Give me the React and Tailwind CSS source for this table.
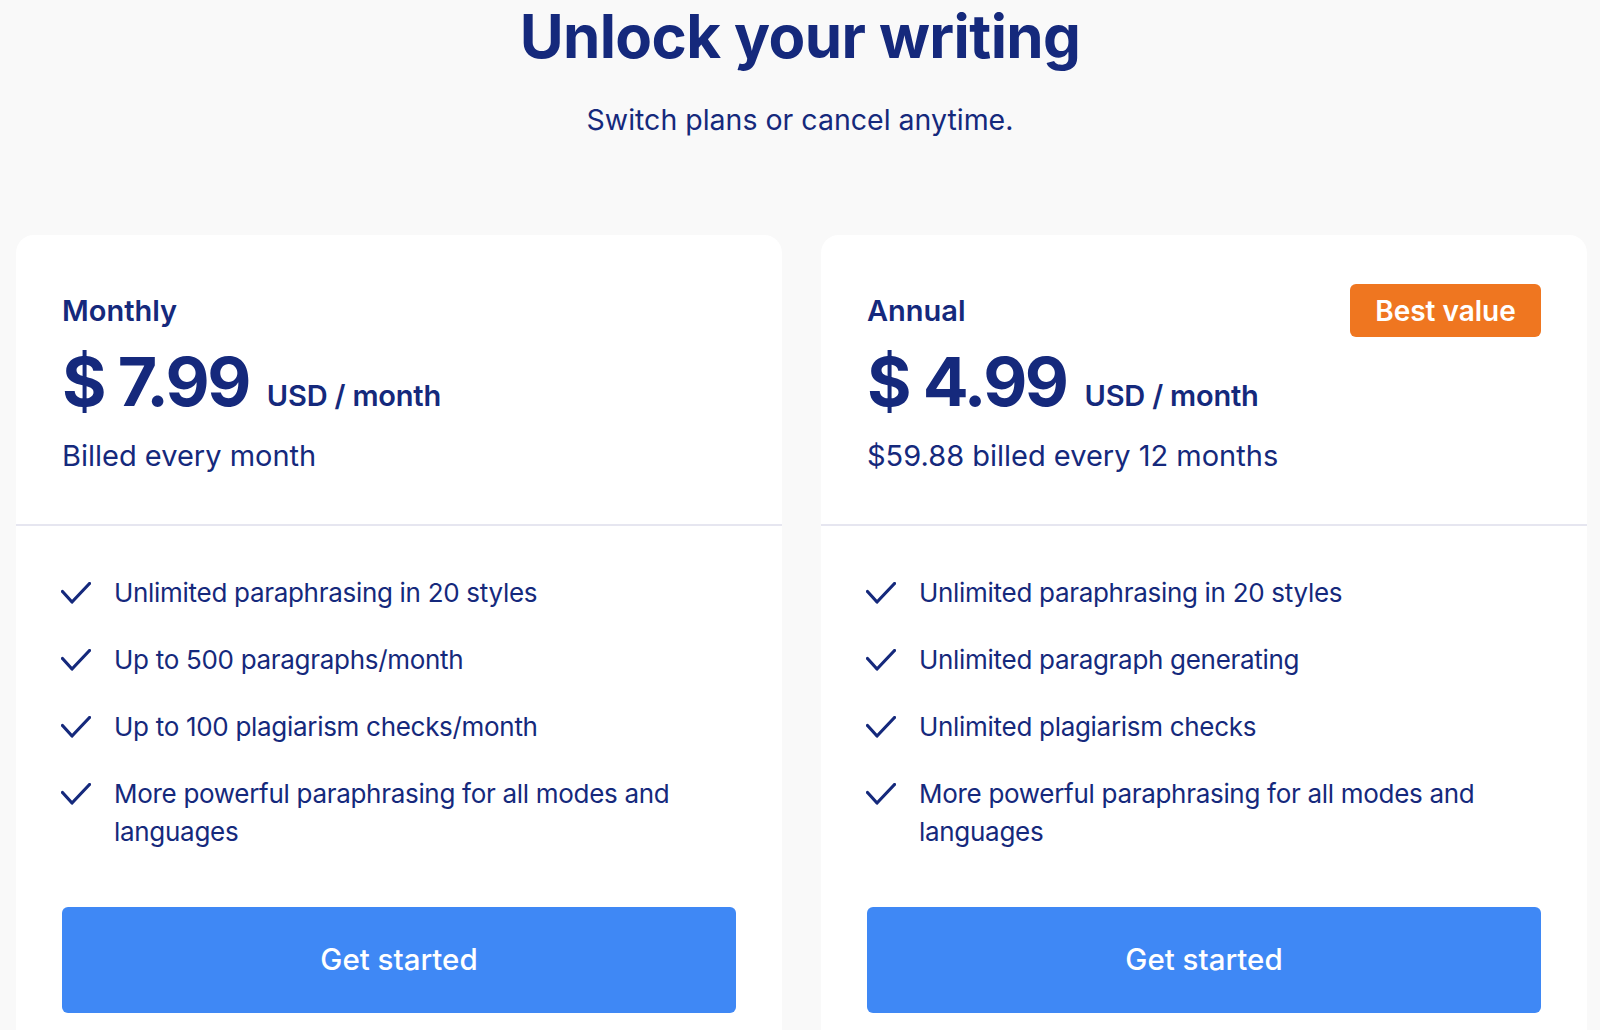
import React from "react";

const Check = () => (
  <svg width="30" height="22" viewBox="0 0 30 22" fill="none" className="shrink-0 mt-[8px] -ml-[1px]">
    <path d="M1.5 9.5 L11 20 L28.5 1.5" stroke="#15297c" strokeWidth="3.2" strokeLinecap="round" strokeLinejoin="round" />
  </svg>
);

function Card({ name, price, billed, features, badge }) {
  return (
    <div className="w-[766px] shrink-0 bg-white rounded-[18px]">
      <div className="px-[46px] pt-[49px] pb-[50px] border-b-2 border-[#e6e6f0]">
        <div className="flex items-center justify-between h-[53px]">
          <div className="text-[29px] font-semibold leading-none">{name}</div>
          {badge && (
            <div className="h-[53px] w-[191px] rounded-[6px] bg-[#ef7620] text-white text-[28px] font-semibold flex items-center justify-center">
              {badge}
            </div>
          )}
        </div>
        <div className="flex items-baseline mt-[9px]">
          <div className="text-[68px] font-bold leading-[70px] tracking-[-2.5px]">{price}</div>
          <div className="ml-[18px] text-[29px] font-semibold tracking-[-0.2px]">USD / month</div>
        </div>
        <div className="mt-[20px] text-[29px] leading-[36px]">{billed}</div>
      </div>
      <div className="px-[46px] pt-[48px] pb-[46px]">
        <ul className="flex flex-col gap-[29px]">
          {features.map((f) => (
            <li key={f} className="flex gap-[23px] items-start">
              <Check />
              <span className="text-[26px] leading-[38px] tracking-[-0.3px]">{f}</span>
            </li>
          ))}
        </ul>
        <button className="mt-[56px] w-full h-[106px] rounded-[6px] bg-[#3f88f5] text-white text-[29.5px] font-medium">
          Get started
        </button>
      </div>
    </div>
  );
}

export default function App() {
  return (
    <div
      className="h-[1030px] overflow-hidden bg-[#f9f9f9] text-[#15297c]"
      style={{ fontFamily: "Inter, 'Noto Sans', sans-serif" }}
    >
      <div className="pt-[6px] text-center">
        <h1 className="text-[60px] font-bold leading-[60px] tracking-[-0.6px]">Unlock your writing</h1>
        <p className="mt-[36px] text-[28.5px] leading-[36px]">Switch plans or cancel anytime.</p>
      </div>
      <div className="flex gap-[39px] pl-[16px] mt-[97px]">
        <Card
          name="Monthly"
          price="$ 7.99"
          billed="Billed every month"
          features={[
            "Unlimited paraphrasing in 20 styles",
            "Up to 500 paragraphs/month",
            "Up to 100 plagiarism checks/month",
            "More powerful paraphrasing for all modes and languages",
          ]}
        />
        <Card
          name="Annual"
          price="$ 4.99"
          billed="$59.88 billed every 12 months"
          badge="Best value"
          features={[
            "Unlimited paraphrasing in 20 styles",
            "Unlimited paragraph generating",
            "Unlimited plagiarism checks",
            "More powerful paraphrasing for all modes and languages",
          ]}
        />
      </div>
    </div>
  );
}
